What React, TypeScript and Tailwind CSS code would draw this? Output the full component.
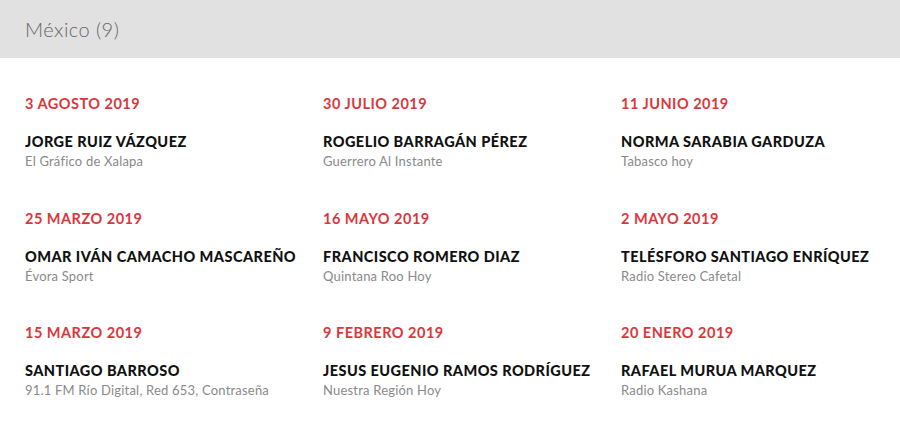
import React from "react";

const items = [
  { date: "3 AGOSTO 2019", name: "JORGE RUIZ VÁZQUEZ", outlet: "El Gráfico de Xalapa" },
  { date: "30 JULIO 2019", name: "ROGELIO BARRAGÁN PÉREZ", outlet: "Guerrero Al Instante" },
  { date: "11 JUNIO 2019", name: "NORMA SARABIA GARDUZA", outlet: "Tabasco hoy" },
  { date: "25 MARZO 2019", name: "OMAR IVÁN CAMACHO MASCAREÑO", outlet: "Évora Sport" },
  { date: "16 MAYO 2019", name: "FRANCISCO ROMERO DIAZ", outlet: "Quintana Roo Hoy" },
  { date: "2 MAYO 2019", name: "TELÉSFORO SANTIAGO ENRÍQUEZ", outlet: "Radio Stereo Cafetal" },
  { date: "15 MARZO 2019", name: "SANTIAGO BARROSO", outlet: "91.1 FM Río Digital, Red 653, Contraseña" },
  { date: "9 FEBRERO 2019", name: "JESUS EUGENIO RAMOS RODRÍGUEZ", outlet: "Nuestra Región Hoy" },
  { date: "20 ENERO 2019", name: "RAFAEL MURUA MARQUEZ", outlet: "Radio Kashana" },
];

export default function App() {
  return (
    <div className="w-[900px] h-[435px] bg-white" style={{ fontFamily: "Lato, 'Open Sans', sans-serif" }}>
      <div className="h-[58px] bg-[#e1e1e1] flex items-center pl-[25px]">
        <span className="text-[20px] font-light text-[#666] tracking-[0.45px]">México (9)</span>
      </div>
      <div className="grid grid-cols-[298px_298px_298px] pl-[25px] pt-[37px]">
        {items.map((it, i) => (
          <div key={i} className="h-[114.5px]">
            <div className="text-[14.5px] font-bold text-[#dc363c] leading-[18px] tracking-[0.5px]">{it.date}</div>
            <div className="mt-[20px] text-[14.5px] font-black text-[#111] leading-[18px] tracking-[0.45px]">{it.name}</div>
            <div className="mt-[1px] text-[13px] text-[#8a8a8a] leading-[18px] tracking-[0.2px]">{it.outlet}</div>
          </div>
        ))}
      </div>
    </div>
  );
}
